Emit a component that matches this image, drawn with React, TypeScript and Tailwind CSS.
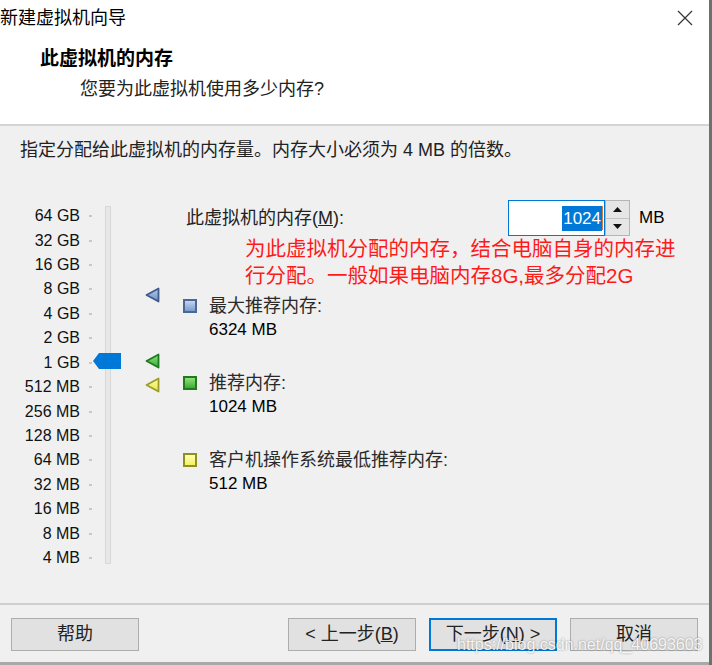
import React from 'react';

const sizes = [
  '64 GB', '32 GB', '16 GB', '8 GB', '4 GB', '2 GB', '1 GB',
  '512 MB', '256 MB', '128 MB', '64 MB', '32 MB', '16 MB', '8 MB', '4 MB',
];

const Marker = ({ id, stroke, from, to, top }: { id: string; stroke: string; from: string; to: string; top: string }) => (
  <svg width="15" height="16" viewBox="0 0 15 16" className={`absolute left-[145px] ${top}`}>
    <defs>
      <linearGradient id={id} x1="0" y1="0" x2="0" y2="1">
        <stop offset="0" stopColor={from} />
        <stop offset="1" stopColor={to} />
      </linearGradient>
    </defs>
    <polygon points="1.5,8 13.5,1.5 13.5,14.5" fill={`url(#${id})`} stroke={stroke} strokeWidth="1.8" strokeLinejoin="round" />
  </svg>
);

const Item = ({ box, title, value }: { box: string; title: string; value: string }) => (
  <div>
    <div className="flex items-center h-[24px]">
      <span className={`w-[14px] h-[14px] border-2 ${box}`} />
      <span className="ml-[12px] text-[18px] text-[#2a2a2a]">{title}</span>
    </div>
    <div className="pl-[26px] h-[24px] leading-[24px] text-[17px] text-black">{value}</div>
  </div>
);

const Button = ({ children, primary }: { children: React.ReactNode; primary?: boolean }) => (
  <button
    className={`w-[128px] h-[33px] bg-[#e1e1e1] text-[18px] text-[#222] flex items-center justify-center ${
      primary ? 'border-2 border-[#0078d7]' : 'border border-[#adadad]'
    }`}
  >
    {children}
  </button>
);

export default function App() {
  return (
    <div className="w-[712px] h-[665px] flex flex-col bg-[#f0f0f0] border-r-[3px] border-[#707070] font-['Liberation_Sans','Noto_Sans_CJK_SC',sans-serif] text-black relative overflow-hidden">
      {/* header */}
      <div className="h-[124px] bg-white flex flex-col">
        <div className="h-[36px] flex items-center justify-between pr-[16px]">
          <span className="text-[18px]">新建虚拟机向导</span>
          <svg width="16" height="16" viewBox="0 0 16 16">
            <path d="M1 1L15 15M15 1L1 15" stroke="#333" strokeWidth="1.2" />
          </svg>
        </div>
        <div className="mt-[10px] pl-[40px] text-[19px] font-bold leading-[26px]">此虚拟机的内存</div>
        <div className="mt-[4px] pl-[80px] text-[18px] leading-[26px] text-[#222]">您要为此虚拟机使用多少内存?</div>
      </div>
      <div className="h-[2px] bg-[#d4d4d4]" />

      {/* body */}
      <div className="flex-1 flex flex-col">
        <div className="mt-[12px] pl-[20px] text-[18px] leading-[24px] text-[#222]">
          指定分配给此虚拟机的内存量。内存大小必须为 4 MB 的倍数。
        </div>

        <div className="mt-[38px] flex">
          {/* slider */}
          <div className="relative w-[183px] pt-[4px]">
            <div className="absolute left-[105px] top-[6px] w-[6px] h-[358px] bg-[#e7e7e7] border border-[#d8d8d8]" />
            {sizes.map((s) => (
              <div key={s} className="h-[24.43px] flex items-center">
                <span className="w-[80px] text-right text-[16px] leading-none text-[#111]">{s}</span>
                <span className="ml-[9px] w-[3px] h-[2px] bg-[#c8c8c8]" />
              </div>
            ))}
            <svg width="28" height="16" viewBox="0 0 28 16" className="absolute left-[93px] top-[153px]">
              <polygon points="0,8 6,0 28,0 28,16 6,16" fill="#0078d7" />
            </svg>
            <Marker id="mb" stroke="#3e5b8e" from="#b6cbe8" to="#6c8ec4" top="top-[87px]" />
            <Marker id="mg" stroke="#1e7a1e" from="#8ee07d" to="#3aa932" top="top-[153px]" />
            <Marker id="my" stroke="#9c9c2c" from="#ffffa0" to="#e6e64a" top="top-[177px]" />
          </div>

          {/* settings */}
          <div className="flex flex-col">
            <div className="flex items-center h-[36px]">
              <span className="w-[325px] pl-[3px] text-[18px] text-[#222]">
                此虚拟机的内存(<span className="underline">M</span>):
              </span>
              <div className="w-[97px] h-[36px] bg-white border border-[#0078d7] flex items-center justify-end pr-[1px]">
                <span className="bg-[#0078d7] text-white text-[17px] leading-[25px] px-[1px]">1024</span>
                <span className="w-[1px] h-[24px] bg-[#d08040]" />
              </div>
              <div className="w-[25px] h-[36px] flex flex-col border border-[#b5b5b5] bg-[#e6e6e6]">
                <div className="flex-1 flex items-center justify-center border-b border-[#c4c4c4]">
                  <svg width="9" height="5" viewBox="0 0 9 5"><polygon points="0,5 4.5,0 9,5" fill="#111" /></svg>
                </div>
                <div className="flex-1 flex items-center justify-center">
                  <svg width="9" height="5" viewBox="0 0 9 5"><polygon points="0,0 9,0 4.5,5" fill="#111" /></svg>
                </div>
              </div>
              <span className="ml-[9px] text-[17px]">MB</span>
            </div>

            <div className="mt-[-1px] pl-[62px] text-[20.5px] leading-[27px] text-[#ff1a1a]">
              为此虚拟机分配的内存，结合电脑自身的内存进
              <br />
              行分配。一般如果电脑内存8G,最多分配2G
            </div>

            <div className="mt-[5px] flex flex-col gap-[29px]">
              <Item box="border-[#4a6796] bg-linear-to-b from-[#c4d5ee] to-[#7a9bcc]" title="最大推荐内存:" value="6324 MB" />
              <Item box="border-[#237a1c] bg-linear-to-b from-[#8ee07a] to-[#3cab2f]" title="推荐内存:" value="1024 MB" />
              <Item box="border-[#8f8f24] bg-linear-to-b from-[#ffffb0] to-[#f2f260]" title="客户机操作系统最低推荐内存:" value="512 MB" />
            </div>
          </div>
        </div>
      </div>

      {/* footer */}
      <div className="h-[2px] bg-[#cfcfcf]" />
      <div className="h-[57px] pt-[13px] px-[11px] flex items-start">
        <Button>帮助</Button>
        <div className="flex-1" />
        <Button>
          &lt; 上一步(<span className="underline">B</span>)
        </Button>
        <div className="w-[13px]" />
        <Button primary>
          下一步(<span className="underline">N</span>) &gt;
        </Button>
        <div className="w-[13px]" />
        <Button>取消</Button>
      </div>
      <div className="h-[3px] bg-[#a8a8a8]" />

      {/* watermark over the footer, as in the screenshot */}
      <div className="absolute left-[457px] top-[634px] text-[16px] leading-[22px] text-white/90 [text-shadow:0_0_2px_rgba(0,0,0,0.45)] pointer-events-none">
        https://blog.csdn.net/qq_40693603
      </div>
    </div>
  );
}
